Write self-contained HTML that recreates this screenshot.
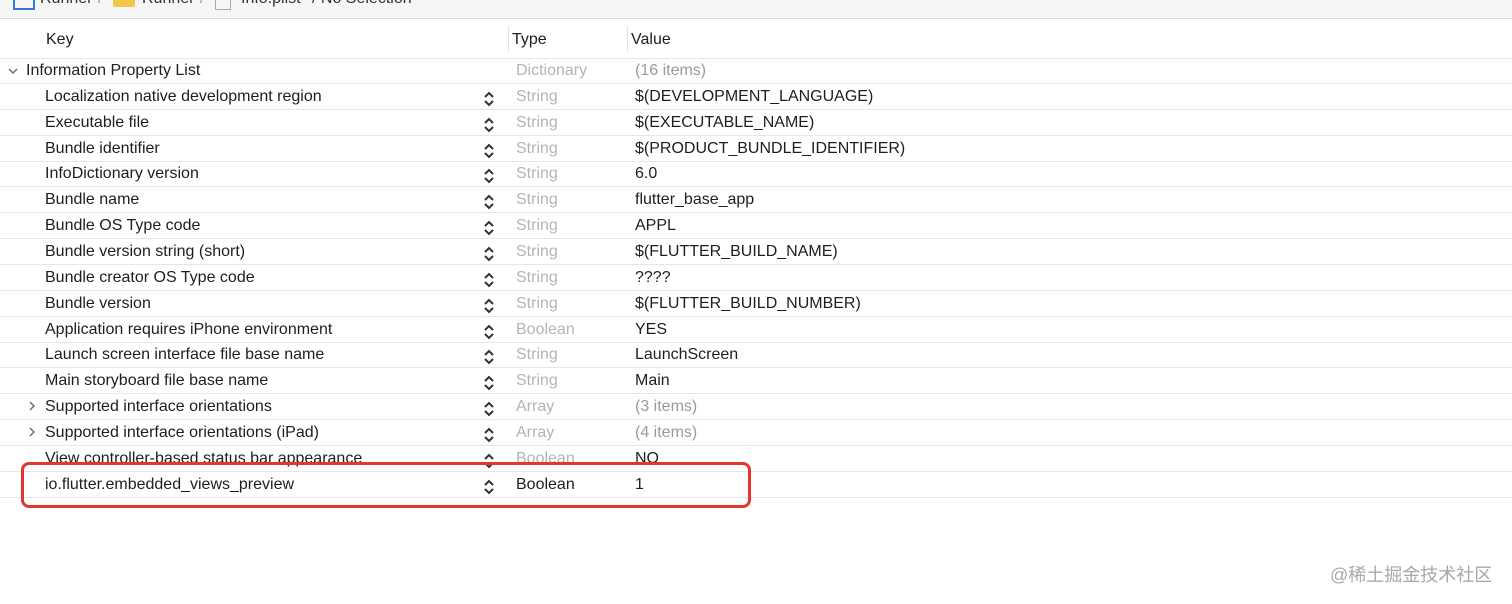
<!DOCTYPE html>
<html><head><meta charset="utf-8"><style>
html,body{margin:0;padding:0;background:#fff;}
body{width:1512px;height:604px;position:relative;overflow:hidden;font-family:"Liberation Sans","Noto Sans CJK SC",sans-serif;font-size:16px;color:#1e1e1e;}
.t{position:absolute;white-space:nowrap;line-height:18px;}
.g{color:#b4b4b4;}
.line{position:absolute;left:0;width:1512px;height:1px;background:#e6e6e6;}
.st{position:absolute;left:483px;width:12px;height:16px;}
.ch{position:absolute;width:10px;height:10px;}
</style></head><body>
<div style="position:absolute;left:0;top:0;width:1512px;height:18px;background:#f6f6f6;border-bottom:1px solid #dcdcdc;"></div>
<div style="position:absolute;left:13px;top:-4px;width:18px;height:12px;border:2px solid #3a78d6;border-top:none;"></div>
<div class="t" style="left:40px;top:-10px;color:#333">Runner</div>
<div class="t" style="left:98px;top:-10px;color:#999">/</div>
<div style="position:absolute;left:113px;top:-2px;width:22px;height:9px;background:#f3c64a;border-radius:2px;"></div>
<div class="t" style="left:142px;top:-10px;color:#333">Runner</div>
<div class="t" style="left:200px;top:-10px;color:#999">/</div>
<div style="position:absolute;left:215px;top:-4px;width:14px;height:12px;border:1px solid #aaa;"></div>
<div class="t" style="left:241px;top:-10px;color:#333">Info.plist</div>
<div class="t" style="left:312px;top:-10px;color:#333">/ No Selection</div>

<div style="position:absolute;left:508px;top:26px;width:1px;height:26px;background:#e2e2e2"></div>
<div style="position:absolute;left:627px;top:26px;width:1px;height:26px;background:#e2e2e2"></div>
<div class="t" style="left:46px;top:31px">Key</div>
<div class="t" style="left:512px;top:31px">Type</div>
<div class="t" style="left:631px;top:31px">Value</div>
<div class="line" style="top:58px"></div>

<div id="rows"></div>
<script>
(function(){
var rows=[
["Information Property List","Dictionary","(16 items)","down",0],
["Localization native development region","String","$(DEVELOPMENT_LANGUAGE)","",1],
["Executable file","String","$(EXECUTABLE_NAME)","",1],
["Bundle identifier","String","$(PRODUCT_BUNDLE_IDENTIFIER)","",1],
["InfoDictionary version","String","6.0","",1],
["Bundle name","String","flutter_base_app","",1],
["Bundle OS Type code","String","APPL","",1],
["Bundle version string (short)","String","$(FLUTTER_BUILD_NAME)","",1],
["Bundle creator OS Type code","String","????","",1],
["Bundle version","String","$(FLUTTER_BUILD_NUMBER)","",1],
["Application requires iPhone environment","Boolean","YES","",1],
["Launch screen interface file base name","String","LaunchScreen","",1],
["Main storyboard file base name","String","Main","",1],
["Supported interface orientations","Array","(3 items)","right",1],
["Supported interface orientations (iPad)","Array","(4 items)","right",1],
["View controller-based status bar appearance","Boolean","NO","",1],
["io.flutter.embedded_views_preview","Boolean","1","",1]
];
var h="";
for(var i=0;i<rows.length;i++){
 var r=rows[i],c=70+i*25.85,ty=Math.round(c-8);
 var kx=r[4]?45:26;
 h+='<div class="t" style="left:'+kx+'px;top:'+ty+'px">'+r[0]+'</div>';
 var last=i==16;
 h+='<div class="t '+(last?'':'g')+'" style="left:516px;top:'+ty+'px">'+r[1]+'</div>';
 h+='<div class="t" style="left:635px;top:'+ty+'px;'+(r[2].charAt(0)=="("?"color:#9a9a9a":"")+'">'+r[2]+'</div>';
 if(r[4]) h+='<svg class="st" style="top:'+Math.round(c-5)+'px" viewBox="0 0 12 16"><path d="M2 6 L6 2 L10 6 M2 10 L6 14 L10 10" fill="none" stroke="#333" stroke-width="2"/></svg>';
 if(r[3]=="down") h+='<svg class="ch" style="left:8px;top:'+Math.round(c-4)+'px" viewBox="0 0 10 10"><path d="M1 3 L5 7 L9 3" fill="none" stroke="#666" stroke-width="1.4"/></svg>';
 if(r[3]=="right") h+='<svg class="ch" style="left:27px;top:'+Math.round(c-5)+'px" viewBox="0 0 10 10"><path d="M3 1 L7 5 L3 9" fill="none" stroke="#666" stroke-width="1.4"/></svg>';
 h+='<div class="line" style="top:'+Math.round(c+13)+'px"></div>';
}
document.getElementById("rows").innerHTML=h;
})();
</script>
<div style="position:absolute;left:21px;top:462px;width:724px;height:40px;border:3px solid #e0382e;border-radius:8px;"></div>
<div class="t" style="left:1330px;top:566px;color:#a8a8a8;font-size:18px;">@稀土掘金技术社区</div>
</body></html>
